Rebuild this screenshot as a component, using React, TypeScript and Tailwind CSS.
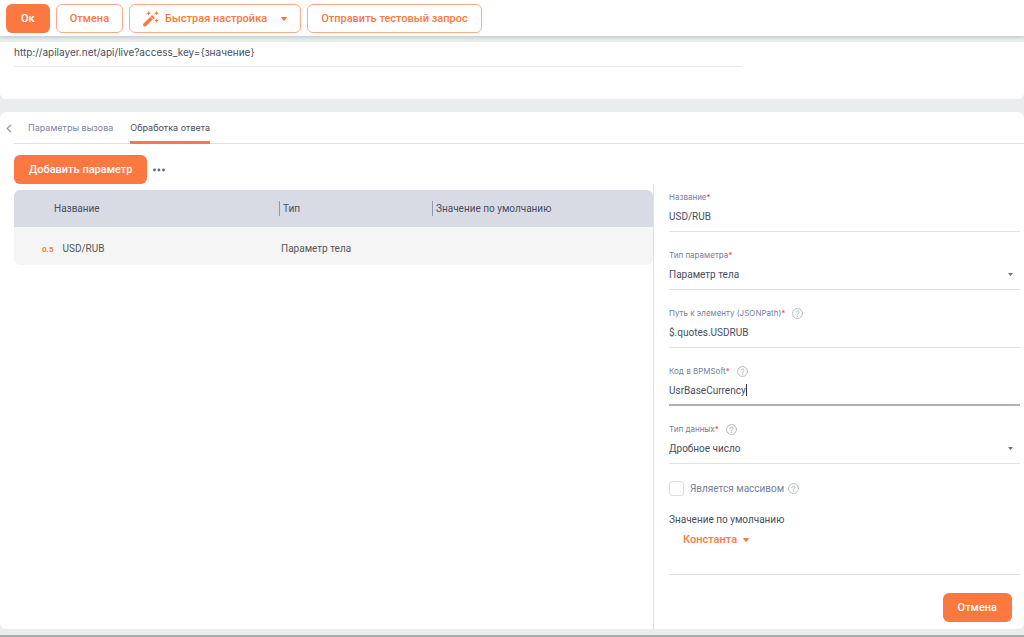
import { useState } from 'react';
import type { ReactNode } from 'react';

const solidButton =
  'h-[29px] rounded-md bg-[#fb7840] px-[15px] pt-[2px] text-[11px] font-medium whitespace-nowrap text-white';
const outlineButton =
  'flex h-[29px] items-center rounded-md border border-[#fcab88] bg-white px-[13px] pt-[2px] text-[11px] font-medium whitespace-nowrap text-[#fb7840]';
const control = 'h-[22px] bg-transparent text-[10px] text-[#484e61] outline-none';

function Triangle({ className }: { className?: string }) {
  return (
    <svg viewBox="0 0 6 4" className={className} fill="currentColor" aria-hidden="true">
      <path d="M0.4 0h5.2a.4.4 0 0 1 .3.6L3.4 3.7a.5.5 0 0 1-.8 0L.1.6A.4.4 0 0 1 .4 0z" />
    </svg>
  );
}

function WandIcon() {
  return (
    <svg viewBox="0 0 16 16" className="h-4 w-4" aria-hidden="true">
      <path d="M1.9 13.7 8.6 7" fill="none" stroke="currentColor" strokeWidth="3.5" strokeLinecap="round" />
      <path d="m9 3.9 2.9 2.9-1.4 1.4-2.9-2.9z" fill="currentColor" />
      <path d="m7.3 5.5 2.9 2.9" stroke="#fff" strokeWidth=".7" />
      <g fill="currentColor">
        <path d="m5.500 0 .7 1.500 1.500.7-1.500.7-.7 1.500-.7-1.500-1.500-.7 1.500-.7z" />
        <path d="m13.400 0 .7 1.600 1.600.7-1.600.7-.7 1.600-.7-1.600-1.600-.7 1.600-.7z" />
        <path d="m13.600 7.400.7 1.500 1.500.7-1.500.7-.7 1.500-.7-1.500-1.500-.7 1.500-.7z" />
      </g>
    </svg>
  );
}

function HelpButton() {
  return (
    <button type="button" aria-label="?" className="text-[#a9adb8]">
      <svg viewBox="0 0 12 12" className="h-[11px] w-[11px]" fill="none" stroke="currentColor" strokeLinecap="round">
        <circle cx="6" cy="6" r="5.4" strokeWidth=".9" />
        <path d="M4.4 4.7c0-2.1 3.2-2.1 3.2 0C7.6 5.8 6 5.7 6 7" strokeWidth=".9" />
        <path d="M6 8.8v.1" strokeWidth="1.1" />
      </svg>
    </button>
  );
}

interface FieldProps {
  id: string;
  label: string;
  help?: boolean;
  focused?: boolean;
  children: ReactNode;
}

function Field({ id, label, help, focused, children }: FieldProps) {
  return (
    <div>
      <div className="flex h-4 items-center gap-[7px]">
        <label htmlFor={id} className="font-['Inter','Liberation_Sans',sans-serif] text-[8px] text-[#77809c]">
          {label}
          <span className="text-[#f0452f]">*</span>
        </label>
        {help && <HelpButton />}
      </div>
      <div
        className={
          focused
            ? 'flex items-center border-b-2 border-[#adb0b9] pb-[3px]'
            : 'flex items-center border-b border-[#dfe1e6] pb-1'
        }
      >
        {children}
      </div>
    </div>
  );
}

function Select({ id, options }: { id: string; options: string[] }) {
  return (
    <>
      <select id={id} className={`${control} w-full appearance-none`}>
        {options.map((option) => (
          <option key={option}>{option}</option>
        ))}
      </select>
      <Triangle className="pointer-events-none mr-[6px] -ml-3 h-[3px] w-[5px] shrink-0 text-[#6b7694]" />
    </>
  );
}

function Toolbar() {
  return (
    <header className="z-10 flex h-9 items-center gap-[6px] bg-white px-[6px] shadow-[0_1px_4px_rgba(0,0,0,0.2)]">
      <button type="button" className={solidButton}>Ок</button>
      <button type="button" className={outlineButton}>Отмена</button>
      <button type="button" className={outlineButton}>
        <WandIcon />
        <span className="ml-[6px]">Быстрая настройка</span>
        <Triangle className="ml-[14px] h-1 w-[6px]" />
      </button>
      <button type="button" className={outlineButton}>Отправить тестовый запрос</button>
    </header>
  );
}

function Tabs() {
  return (
    <nav className="flex h-8">
      <button type="button" aria-label="Назад" className="flex w-[14px] items-center pl-[6px] text-[#9b9b9b]">
        <svg viewBox="0 0 6 10" className="h-[9px] w-[6px]" fill="none" stroke="currentColor" strokeWidth="1.3">
          <path d="M5.2.8 1 5l4.2 4.2" />
        </svg>
      </button>
      <div
        role="tablist"
        className="flex flex-1 gap-[17px] border-b border-[#dfe1e6] pl-[14px] font-['Inter','Liberation_Sans',sans-serif] text-[9px]"
      >
        <button type="button" role="tab" aria-selected="false" className="h-8 text-[#7d86a3]">
          Параметры вызова
        </button>
        <button
          type="button"
          role="tab"
          aria-selected="true"
          className="h-8 border-b-3 border-[#fb7840] pt-[3px] text-[#484e61]"
        >
          Обработка ответа
        </button>
      </div>
    </nav>
  );
}

function ParametersTable() {
  return (
    <table className="mt-[6px] w-full table-fixed border-separate border-spacing-0 self-start overflow-hidden rounded-md text-left text-[10px]">
      <colgroup>
        <col className="w-[265px]" />
        <col className="w-[153px]" />
        <col />
      </colgroup>
      <thead className="bg-[#d8dbe4] text-[#484e61]">
        <tr>
          <th className="h-[37px] pl-10 font-normal">Название</th>
          <th className="font-normal">
            <span className="block border-l border-[#8e97b0] pl-[3px]">Тип</span>
          </th>
          <th className="font-normal">
            <span className="block border-l border-[#8e97b0] pl-[3px]">Значение по умолчанию</span>
          </th>
        </tr>
      </thead>
      <tbody className="bg-[#f5f5f5] text-[#555]">
        <tr>
          <td className="h-[38px] pt-1 pl-7">
            <span className="mr-[9px] text-[8px] font-bold text-[#fb7840]">0.5</span>
            USD/RUB
          </td>
          <td className="pt-1 pl-[2px]">Параметр тела</td>
          <td />
        </tr>
      </tbody>
    </table>
  );
}

function ParameterForm() {
  const [code, setCode] = useState('UsrBaseCurrency');

  return (
    <form className="flex flex-col border-l border-[#dfe1e6] pt-[5px] pr-1 pb-[7px] pl-[15px]">
      <div className="flex flex-col gap-[15px]">
        <Field id="name" label="Название">
          <input id="name" defaultValue="USD/RUB" className={`${control} w-full`} />
        </Field>
        <Field id="kind" label="Тип параметра">
          <Select id="kind" options={['Параметр тела']} />
        </Field>
        <Field id="path" label="Путь к элементу (JSONPath)" help>
          <input id="path" defaultValue="$.quotes.USDRUB" className={`${control} w-full`} />
        </Field>
        <Field id="code" label="Код в BPMSoft" help focused>
          <input
            id="code"
            value={code}
            onChange={(e) => setCode(e.target.value)}
            className={`${control} field-sizing-content caret-transparent`}
          />
          <span className="h-3 w-px bg-[#30343f]" />
        </Field>
        <Field id="type" label="Тип данных" help>
          <Select id="type" options={['Дробное число']} />
        </Field>
      </div>
      <div className="mt-4 flex h-4 items-center">
        <input
          id="array"
          type="checkbox"
          className="h-[15px] w-[15px] appearance-none rounded-[3px] border border-[#dadde6] checked:bg-[#fb7840]"
        />
        <label htmlFor="array" className="mr-1 ml-[6px] text-[10px] text-[#77809c]">
          Является массивом
        </label>
        <HelpButton />
      </div>
      <div className="mt-4 border-b border-[#dfe1e6] pb-6">
        <p className="h-4 text-[10px] leading-4 text-[#484e61]">Значение по умолчанию</p>
        <button
          type="button"
          className="mt-[2px] ml-[14px] flex h-5 items-center text-[11px] font-medium text-[#fb7840]"
        >
          Константа
          <Triangle className="ml-[6px] h-1 w-[6px]" />
        </button>
      </div>
      <button type="button" className={`${solidButton} mt-[18px] mr-2 self-end`}>Отмена</button>
    </form>
  );
}

export default function App() {
  return (
    <div className="flex min-h-screen flex-col bg-[#e9eded] font-['Roboto','Liberation_Sans',sans-serif]">
      <Toolbar />
      <section className="mt-[6px] h-[57px] rounded-b-md bg-white pl-[14px]">
        <input
          aria-label="URL"
          defaultValue="http://apilayer.net/api/live?access_key={значение}"
          className="block h-[25px] w-[72%] border-b border-[#e6e8ed] pb-1 font-['Inter','Liberation_Sans',sans-serif] text-[10px] text-[#484e61] outline-none"
        />
      </section>
      <main className="mt-[13px] flex flex-1 flex-col rounded-md bg-white">
        <Tabs />
        <div className="mt-[11px] flex items-center gap-[6px] pl-[14px]">
          <button type="button" className={solidButton}>Добавить параметр</button>
          <button type="button" aria-label="Ещё" className="text-[#5b678a]">
            <svg viewBox="0 0 12 4" className="h-1 w-3" fill="currentColor">
              <circle cx="1.5" cy="2" r="1.4" />
              <circle cx="6" cy="2" r="1.4" />
              <circle cx="10.5" cy="2" r="1.4" />
            </svg>
          </button>
        </div>
        <div className="grid flex-1 grid-cols-[1fr_371px] pl-[14px]">
          <ParametersTable />
          <ParameterForm />
        </div>
      </main>
      <footer className="mt-[6px] h-[2px] bg-[#aaabab]" />
    </div>
  );
}
